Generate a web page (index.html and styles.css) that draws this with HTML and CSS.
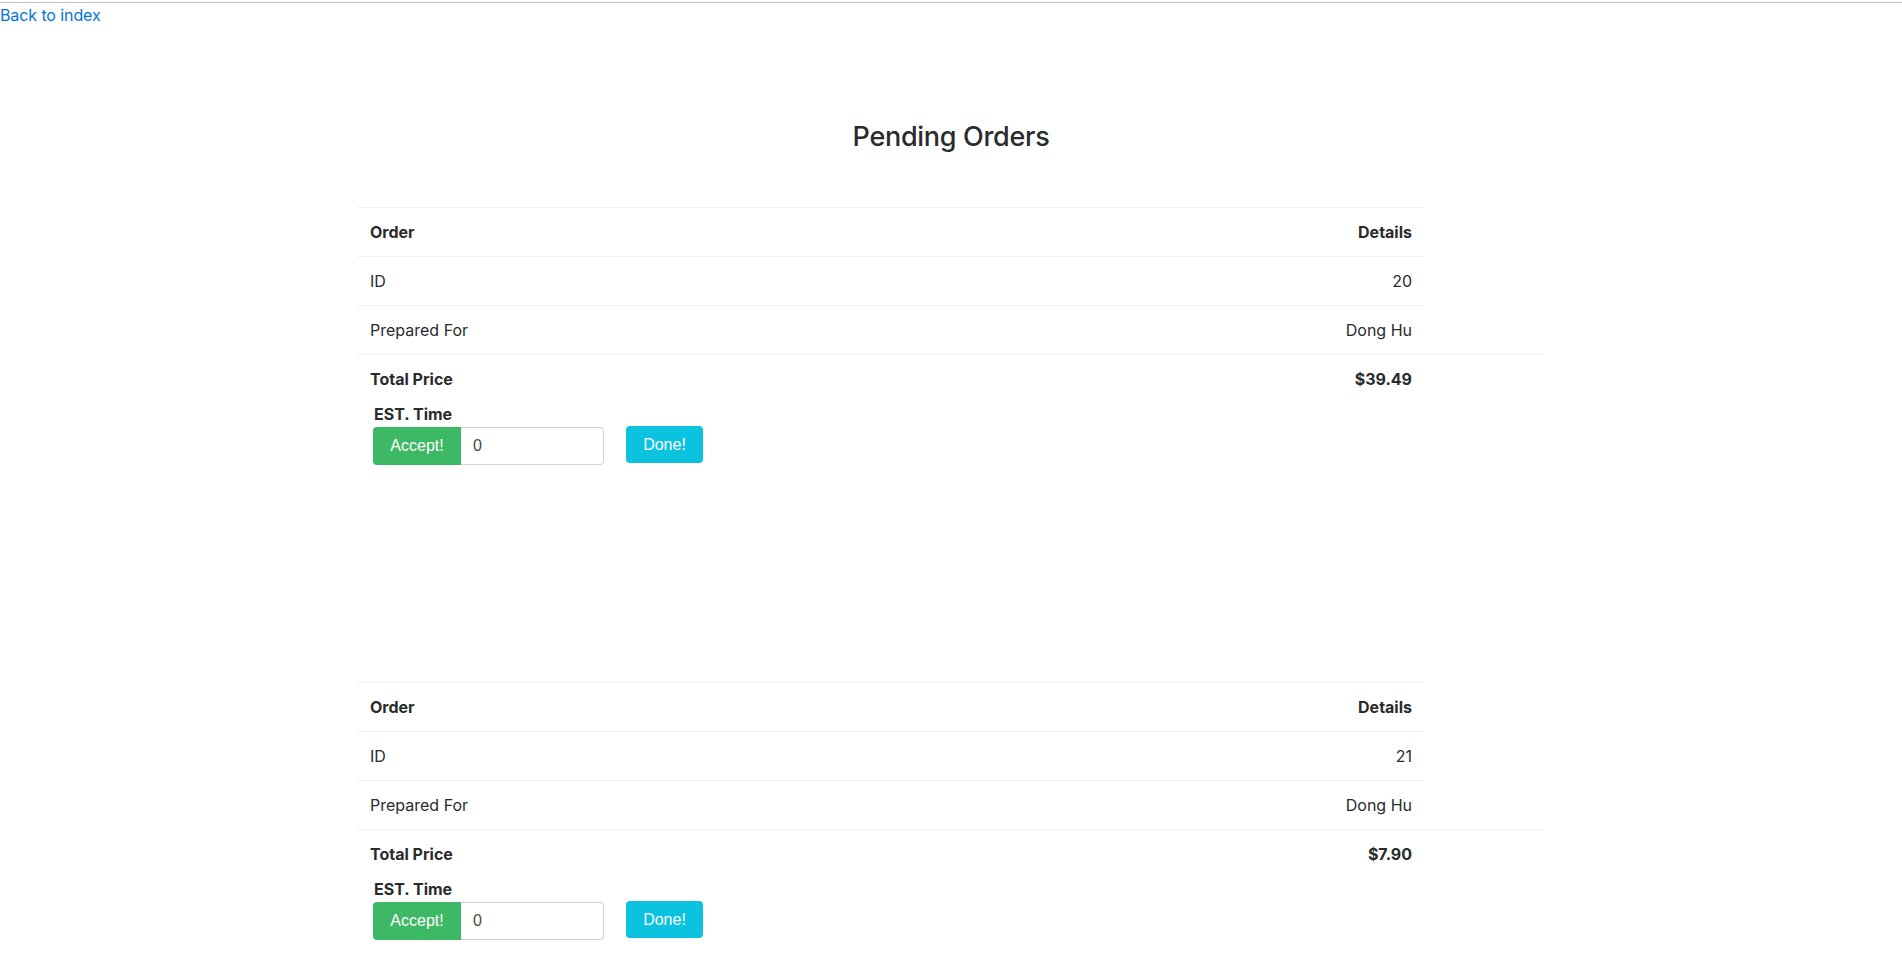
FILE: index.html
```html
<!DOCTYPE html>
<html lang="en">
<head>
<meta charset="utf-8">
<title>Pending Orders</title>
<link rel="stylesheet" href="styles.css">
</head>
<body>
<div class="topline"></div>
<a class="back" href="#">Back to index</a>
<h3 class="page-title">Pending Orders</h3>
<div class="orders">
  <section class="order">
    <table class="order-table">
      <colgroup><col><col><col class="col-extra"></colgroup>
      <thead>
        <tr><th class="left">Order</th><th class="right">Details</th></tr>
      </thead>
      <tbody>
        <tr><td>ID</td><td class="right">20</td></tr>
        <tr><td>Prepared For</td><td class="right">Dong Hu</td></tr>
        <tr class="total"><td>Total Price</td><td class="right">$39.49</td><td></td></tr>
      </tbody>
    </table>
    <form class="est">
      <label class="est-label">EST. Time</label>
      <div class="est-row">
        <div class="input-group">
          <button type="button" class="btn btn-accept">Accept!</button>
          <input class="est-input" type="text" value="0">
        </div>
        <button type="button" class="btn btn-done">Done!</button>
      </div>
    </form>
  </section>
  <section class="order">
    <table class="order-table">
      <colgroup><col><col><col class="col-extra"></colgroup>
      <thead>
        <tr><th class="left">Order</th><th class="right">Details</th></tr>
      </thead>
      <tbody>
        <tr><td>ID</td><td class="right">21</td></tr>
        <tr><td>Prepared For</td><td class="right">Dong Hu</td></tr>
        <tr class="total"><td>Total Price</td><td class="right">$7.90</td><td></td></tr>
      </tbody>
    </table>
    <form class="est">
      <label class="est-label">EST. Time</label>
      <div class="est-row">
        <div class="input-group">
          <button type="button" class="btn btn-accept">Accept!</button>
          <input class="est-input" type="text" value="0">
        </div>
        <button type="button" class="btn btn-done">Done!</button>
      </div>
    </form>
  </section>
</div>
</body>
</html>
```
FILE: styles.css
```css
html, body {
  margin: 0;
  padding: 0;
  background: #fff;
}
body {
  font-family: Inter, "Liberation Sans", Arial, sans-serif;
  font-size: 16px;
  line-height: 24px;
  color: #292b2c;
}
.topline {
  margin-top: 2px;
  height: 1px;
  background: #c4c4c4;
}
.back {
  display: inline-block;
  color: #0275d8;
  text-decoration: none;
  line-height: 24px;
  letter-spacing: -0.1px;
}
.page-title {
  margin: 94px 0 55px;
  text-align: center;
  font-size: 27px;
  font-weight: 500;
  line-height: 31px;
  letter-spacing: -0.3px;
}
.orders {
  display: flex;
  flex-direction: column;
  gap: 217px;
}
.order {
  width: 1186px;
  margin: 0 auto;
}
.order-table {
  width: 100%;
  border-collapse: collapse;
  table-layout: fixed;
}
.col-extra {
  width: 120px;
}
.order-table th,
.order-table td {
  padding: 12px;
  border-top: 1px solid #eceeef;
  line-height: 24px;
  vertical-align: top;
  font-size: 16px;
}
.order-table th {
  font-weight: 700;
}
.left { text-align: left; }
.right { text-align: right; }
.total td {
  font-weight: 700;
}
.est {
  padding: 0 15px;
  margin: 0;
}
.est-label {
  display: block;
  font-weight: 700;
  font-size: 16px;
  line-height: 23px;
  padding-left: 1px;
}
.est-row {
  display: flex;
  align-items: flex-start;
  gap: 22px;
}
.input-group {
  display: flex;
  margin-top: 1px;
  height: 38px;
}
.btn {
  font-family: "Liberation Sans", Arial, sans-serif;
  font-size: 16px;
  color: #fff;
  border: none;
  padding: 0;
  cursor: pointer;
}
.btn-accept {
  width: 88px;
  height: 38px;
  background: #3db865;
  border-radius: 4px 0 0 4px;
}
.est-input {
  box-sizing: border-box;
  width: 143px;
  height: 38px;
  margin: 0;
  padding: 0 12px;
  border: 1px solid #d2d2d2;
  border-left: none;
  border-radius: 0 4px 4px 0;
  font-family: "Liberation Sans", Arial, sans-serif;
  font-size: 16px;
  color: #464a4c;
  outline: none;
}
.btn-done {
  width: 77px;
  height: 37px;
  background: #0bc3df;
  border-radius: 4px;
}
```
